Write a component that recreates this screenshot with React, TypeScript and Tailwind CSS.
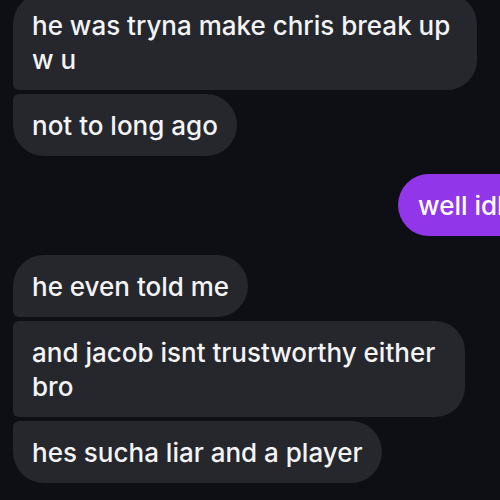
import React from "react";

export default function App() {
  const grey = "bg-[#26272c] text-[#f4f4f6]";
  return (
    <div
      className="w-[500px] h-[500px] overflow-hidden bg-[#0d0f14] relative"
      style={{ fontFamily: "Inter, 'Noto Sans', sans-serif" }}
    >
      <div className="flex flex-col items-start pl-[13px] mt-[-6px] text-[26px] font-medium leading-[34px]">
        <div className={`${grey} w-[464px] px-[19px] pt-[15px] pb-[13px] rounded-tl-[30px] rounded-tr-[30px] rounded-br-[30px] rounded-bl-[6px]`}>
          he was tryna make chris break up
          <br />w u
        </div>
        <div className={`${grey} mt-[4px] px-[19px] pt-[15px] pb-[13px] rounded-tl-[6px] rounded-tr-[31px] rounded-br-[31px] rounded-bl-[31px] whitespace-nowrap`}>
          not to long ago
        </div>
        <div className="self-stretch flex justify-start mt-[18px] pl-[385px]">
          <div className="bg-[#9236ea] text-white px-[20px] pt-[15px] pb-[13px] rounded-l-[31px] whitespace-nowrap">
            well idk
          </div>
        </div>
        <div className={`${grey} mt-[19px] px-[19px] pt-[15px] pb-[13px] rounded-tl-[31px] rounded-tr-[31px] rounded-br-[31px] rounded-bl-[6px] whitespace-nowrap`}>
          he even told me
        </div>
        <div className={`${grey} mt-[4px] w-[452px] px-[19px] pt-[15px] pb-[13px] rounded-tl-[6px] rounded-tr-[30px] rounded-br-[30px] rounded-bl-[6px]`}>
          and jacob isnt trustworthy either
          <br />bro
        </div>
        <div className={`${grey} mt-[4px] px-[19px] pt-[15px] pb-[13px] rounded-tl-[6px] rounded-tr-[31px] rounded-br-[31px] rounded-bl-[31px] whitespace-nowrap`}>
          hes sucha liar and a player
        </div>
      </div>
    </div>
  );
}
